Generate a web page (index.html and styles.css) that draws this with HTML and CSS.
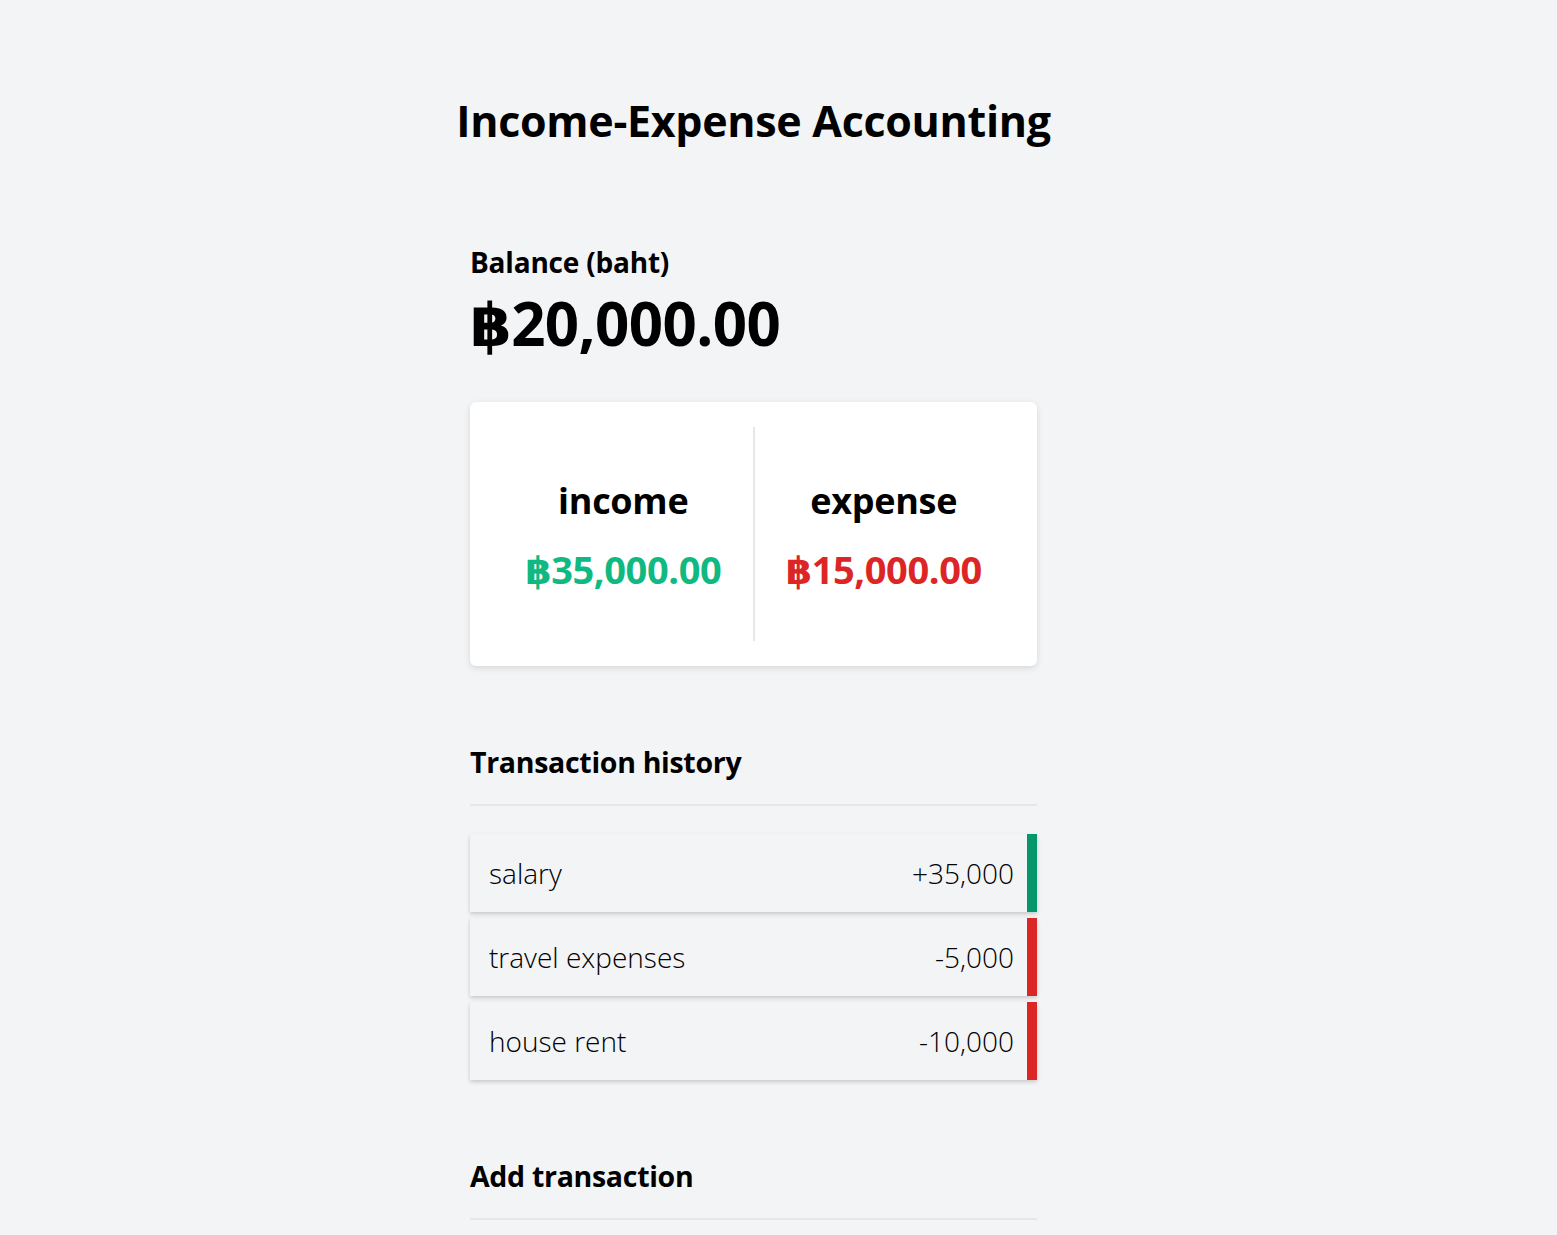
FILE: index.html
```html
<!DOCTYPE html>
<html lang="en">
<head>
  <meta charset="UTF-8" />
  <meta name="viewport" content="width=device-width, initial-scale=1.0"/>
  <title>Income-Expense Accounting</title>
  <link rel="stylesheet" href="styles.css">
</head>
<body>

<h1 class="title">Income-Expense Accounting</h1>

<div class="container">
  <h4 class="balance-label">Balance (baht)</h4>
  <h1 class="balance">฿20,000.00</h1>

  <div class="summary">
    <div class="summary-col">
      <h4>income</h4>
      <p class="money plus">฿35,000.00</p>
    </div>
    <div class="summary-col">
      <h4>expense</h4>
      <p class="money minus">฿15,000.00</p>
    </div>
  </div>

  <h3 class="section">Transaction history</h3>
  <ul class="list">
    <li class="plus">salary <span>+35,000</span></li>
    <li class="minus">travel expenses <span>-5,000</span></li>
    <li class="minus">house rent <span>-10,000</span></li>
  </ul>

  <h3 class="section">Add transaction</h3>
</div>

</body>
</html>
```

FILE: styles.css
```css
body {
  font-family: "Open Sans", "DejaVu Sans", sans-serif;
  background-color: #f3f4f6;
  color: #000;
  margin: 0;
  padding: 0 50px 40px 0;
}
.title { text-align: center; font-size: 43px; font-weight: 700; margin: 92px 0 0; line-height: 58px; letter-spacing: -0.3px; }
.container { width: 567px; margin: 0 auto; padding-top: 94px; }
.balance-label { font-size: 28px; margin: 0; line-height: 36px; letter-spacing: -0.2px; }
.balance { font-size: 60px; margin: 8px 0 0; line-height: 70px; letter-spacing: -0.6px; }
.summary { display: flex; background: #fff; border-radius: 6px; box-shadow: 0 2px 6px rgba(0,0,0,0.12); padding: 25px 24px; margin-top: 44px; }
.summary-col { flex: 1; text-align: center; padding: 50px 0 48px; }
.summary-col + .summary-col { border-left: 2px solid #e5e7eb; }
.summary-col h4 { font-size: 36px; margin: 0; line-height: 48px; letter-spacing: -0.3px; }
.money { font-size: 38px; font-weight: 700; margin: 20px 0 0; line-height: 48px; letter-spacing: -0.4px; }
.money.plus { color: #10b981; }
.money.minus { color: #dc2626; }
.section { font-size: 28.5px; margin: 76px 0 0; padding-bottom: 22px; line-height: 40px; border-bottom: 2px solid #e5e7eb; letter-spacing: -0.3px; }
.list { list-style: none; margin: 28px 0 0; padding: 0; }
.list li { display: flex; justify-content: space-between; align-items: center; height: 78px; padding: 0 13px 0 19px; margin-bottom: 6px; background: #f3f4f6; box-shadow: 0 2px 4px rgba(0,0,0,0.18); font-size: 28px; font-weight: 300; }
.list li.plus { border-right: 10px solid #059669; }
.list li.minus { border-right: 10px solid #dc2626; }
```
